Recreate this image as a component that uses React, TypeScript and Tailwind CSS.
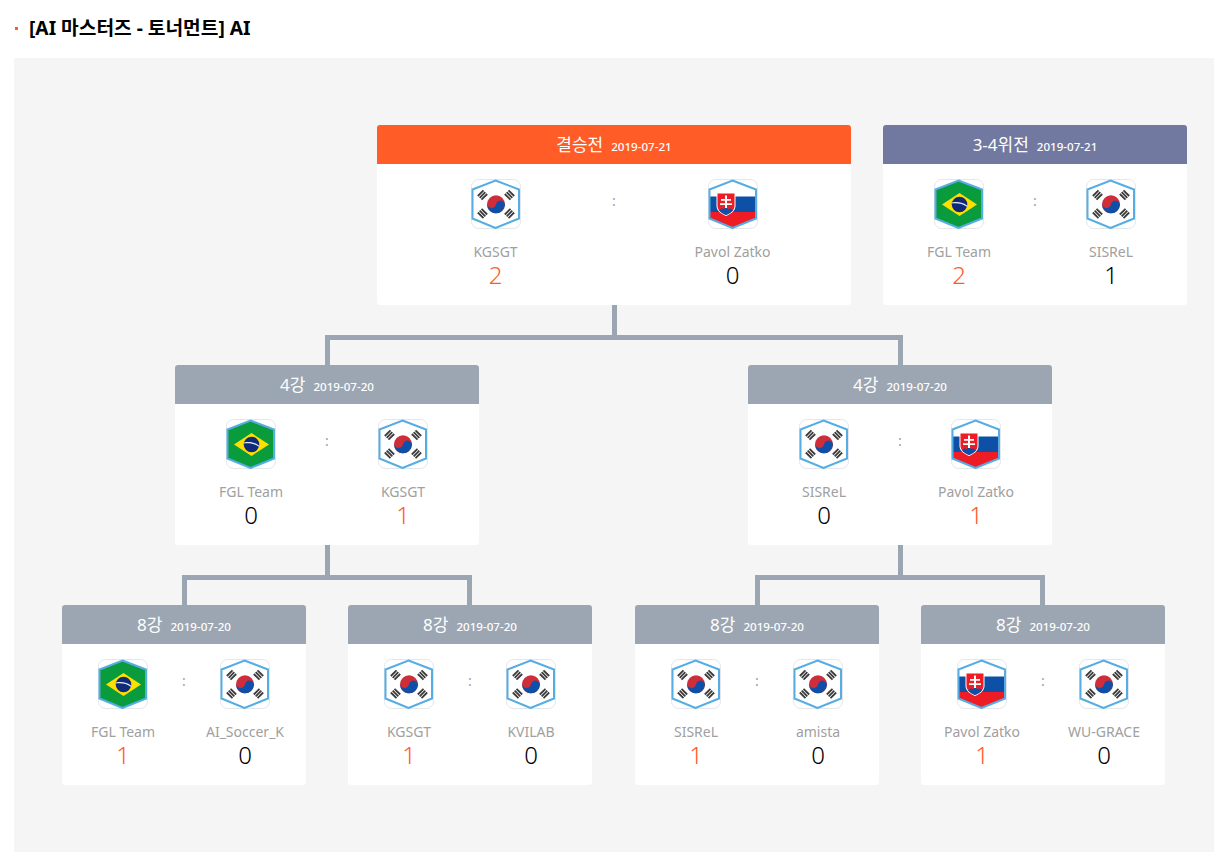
import { useId } from 'react';

const HEX = '24.5,1.5 48,10.5 48,39.5 24.5,49 1.5,39.5 1.5,10.5';

type Country = 'kr' | 'sk' | 'br';

function Trigram({ x, y, angle }: { x: number; y: number; angle: number }) {
  return (
    <g transform={`translate(${x} ${y}) rotate(${angle})`} fill="#3a3a3a">
      <rect x="-4" y="-3.500" width="8" height="1.800" />
      <rect x="-4" y="-0.900" width="8" height="1.800" />
      <rect x="-4" y="1.700" width="8" height="1.800" />
    </g>
  );
}

function Flag({ country }: { country: Country }) {
  const clip = useId();
  return (
    <svg width="50" height="50" viewBox="0 0 50 50" className="block">
      <defs>
        <clipPath id={clip}>
          <polygon points={HEX} />
        </clipPath>
      </defs>
      <rect x="0.5" y="0.5" width="49" height="49" rx="7" fill="#fff" stroke="#e3e6ea" />
      <g clipPath={`url(#${clip})`}>
        {country === 'kr' && (
          <>
            <rect width="50" height="50" fill="#fff" />
            <circle cx="25" cy="25.300" r="9" fill="#cd2e3a" />
            <path d="M16 25.300a9 9 0 0 0 18 0a4.500 4.500 0 0 0-9 0a4.500 4.500 0 0 1-9 0z" fill="#0f4fa8" transform="rotate(10 25 25.300)" />
            <Trigram x={11.500} y={16} angle={-45} />
            <Trigram x={38.500} y={16} angle={45} />
            <Trigram x={11.500} y={34.500} angle={45} />
            <Trigram x={38.500} y={34.500} angle={-45} />
          </>
        )}
        {country === 'sk' && (
          <>
            <rect width="50" height="17.500" fill="#fff" />
            <rect y="17.500" width="50" height="15.500" fill="#0d50a5" />
            <rect y="33" width="50" height="17" fill="#ee1c25" />
            <path d="M8.500 13.500h19v13.500c0 5-5 8-9.500 10c-4.500-2-9.500-5-9.500-10z" fill="#fff" />
            <path d="M9.500 14.500h17v12.500c0 4.500-4.500 7-8.500 9c-4-2-8.500-4.500-8.500-9z" fill="#ee1c25" />
            <path d="M17 16.500h2v3.500h4v1.800h-4v2.400h5v1.800h-5v4.500h-2v-4.500h-5v-1.800h5v-2.400h-4V20h4z" fill="#fff" />
            <path d="M11 31.500c2-2.500 3.500-2.500 4.500-1.500c1-1.500 4-1.500 5 0c1-1 3-1 4.500 1.500c-2 2-4.500 3.500-7 4.500c-2.500-1-5-2.500-7-4.500z" fill="#0d50a5" />
          </>
        )}
        {country === 'br' && (
          <>
            <rect width="50" height="50" fill="#0a9b3c" />
            <polygon points="25.500,14 43,25.500 25.500,37 8,25.500" fill="#fedf00" />
            <circle cx="25.500" cy="25.500" r="7.800" fill="#0e2a78" />
            <path d="M17.800 23.500c6-1.200 11.300-.2 15.400 3.200l-.4 1.100c-4.200-3.100-9.800-4.100-15.100-3.200z" fill="#dfe6ee" />
          </>
        )}
      </g>
      <polygon points={HEX} fill="none" stroke="#56ade3" strokeWidth="2" />
    </svg>
  );
}

type Team = { name: string; country: Country; score: number; win?: boolean };

function Player({ team }: { team: Team }) {
  return (
    <div className="flex flex-col items-center">
      <Flag country={team.country} />
      <div className="mt-[13px] h-[20px] text-[14px] leading-[20px] text-[#a0a0a0]">{team.name}</div>
      <div className={`h-[28px] text-[24px] leading-[26px] font-light ${team.win ? 'text-[#ff5a2a]' : 'text-black'}`}>
        {team.score}
      </div>
    </div>
  );
}

function MatchCard({ title, date, a, b, width, header = 'bg-[#9ca6b2]' }: {
  title: string; date: string; a: Team; b: Team; width: string; header?: string;
}) {
  return (
    <div className={`${width} h-[180px] shrink-0 overflow-hidden rounded-[3px] bg-white`}>
      <div className={`flex h-[39px] items-center justify-center gap-2 text-white ${header}`}>
        <span className="mt-[1px] text-[17px] leading-[24px]">{title}</span>
        <span className="mt-[4px] text-[11.6px] leading-[20px] font-medium">{date}</span>
      </div>
      <div className="relative grid grid-cols-2 pt-[15px]">
        <Player team={a} />
        <Player team={b} />
        <span className="absolute left-1/2 top-[27px] -translate-x-1/2 text-[14px] leading-[20px] text-[#a0a0a0]">:</span>
      </div>
    </div>
  );
}

function Connector({ width, className = '' }: { width: string; className?: string }) {
  return (
    <div className={`${width} shrink-0 ${className}`}>
      <div className="mx-auto h-[30px] w-[5px] bg-[#9ca6b2]" />
      <div className="h-[30px] border-x-[5px] border-t-[5px] border-[#9ca6b2]" />
    </div>
  );
}

const kgsgt: Team = { name: 'KGSGT', country: 'kr', score: 0 };
const pavol: Team = { name: 'Pavol Zaťko', country: 'sk', score: 0 };
const fgl: Team = { name: 'FGL Team', country: 'br', score: 0 };
const sisrel: Team = { name: 'SISReL', country: 'kr', score: 0 };

export default function App() {
  return (
    <div className="h-[856px] bg-white text-black [font-family:'Noto_Sans','Noto_Sans_CJK_KR',sans-serif]">
      <div className="flex h-[58px] items-center pb-[3px] pl-[15px]">
        <span className="mr-[11px] mt-[2px] h-[3px] w-[3px] bg-[#ff5a2a]" />
        <h2 className="text-[19.2px] leading-[26px] font-bold">[AI 마스터즈 - 토너먼트] AI</h2>
      </div>
      <div className="ml-[14px] h-[794px] w-[1200px] bg-[#f5f5f5] pt-[67px]">
        <div className="flex gap-[32px] pl-[363px]">
          <MatchCard
            width="w-[474px]"
            header="bg-[#ff5c28]"
            title="결승전"
            date="2019-07-21"
            a={{ ...kgsgt, score: 2, win: true }}
            b={pavol}
          />
          <MatchCard
            width="w-[304px]"
            header="bg-[#7279a1]"
            title="3-4위전"
            date="2019-07-21"
            a={{ ...fgl, score: 2, win: true }}
            b={{ ...sisrel, score: 1 }}
          />
        </div>

        <Connector width="w-[578px]" className="ml-[311px]" />

        <div className="flex gap-[269px] pl-[161px]">
          <MatchCard width="w-[304px]" title="4강" date="2019-07-20" a={fgl} b={{ ...kgsgt, score: 1, win: true }} />
          <MatchCard width="w-[304px]" title="4강" date="2019-07-20" a={sisrel} b={{ ...pavol, score: 1, win: true }} />
        </div>

        <div className="flex gap-[283px] pl-[168px]">
          <Connector width="w-[290px]" />
          <Connector width="w-[290px]" />
        </div>

        <div className="flex pl-[48px]">
          <MatchCard
            width="w-[244px]"
            title="8강"
            date="2019-07-20"
            a={{ ...fgl, score: 1, win: true }}
            b={{ name: 'AI_Soccer_K', country: 'kr', score: 0 }}
          />
          <div className="w-[42px] shrink-0" />
          <MatchCard
            width="w-[244px]"
            title="8강"
            date="2019-07-20"
            a={{ ...kgsgt, score: 1, win: true }}
            b={{ name: 'KVILAB', country: 'kr', score: 0 }}
          />
          <div className="w-[43px] shrink-0" />
          <MatchCard
            width="w-[244px]"
            title="8강"
            date="2019-07-20"
            a={{ ...sisrel, score: 1, win: true }}
            b={{ name: 'amista', country: 'kr', score: 0 }}
          />
          <div className="w-[42px] shrink-0" />
          <MatchCard
            width="w-[244px]"
            title="8강"
            date="2019-07-20"
            a={{ ...pavol, score: 1, win: true }}
            b={{ name: 'WU-GRACE', country: 'kr', score: 0 }}
          />
        </div>
      </div>
    </div>
  );
}
